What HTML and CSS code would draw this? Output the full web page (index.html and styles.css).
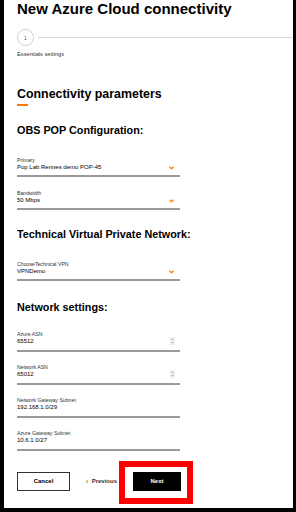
FILE: index.html
```html
<!DOCTYPE html>
<html lang="en">

<head>
    <meta charset="UTF-8" />
    <meta name="viewport" content="width=device-width, initial-scale=1.0" />
    <title>New Azure Cloud connectivity</title>
    <link rel="stylesheet" href="styles.css">
</head>

<body>

    <div class="page">
        <h1 class="title">New Azure Cloud connectivity</h1>

        <div class="stepper">
            <span class="step_num">1</span>
            <span class="step_line"></span>
        </div>
        <div class="step_label">Essentials settings</div>

        <h2 class="section_title">Connectivity parameters</h2>
        <div class="accent"></div>

        <div class="group">
            <h3 class="group_title">OBS POP Configuration:</h3>
            <div class="field select">
                <div class="field_label">Primary</div>
                <div class="field_value">
                    <span>Pop Lab Rennes demo POP-45</span>
                    <svg class="chevron" width="5" height="4" viewBox="0 0 5 4"><polyline points="0.6,0.8 2.5,2.9 4.4,0.8" fill="none" stroke="#ff7900" stroke-width="1.3" /></svg>
                </div>
            </div>
            <div class="field select">
                <div class="field_label">Bandwidth</div>
                <div class="field_value">
                    <span>50 Mbps</span>
                    <svg class="chevron" width="5" height="4" viewBox="0 0 5 4"><polyline points="0.6,0.8 2.5,2.9 4.4,0.8" fill="none" stroke="#ff7900" stroke-width="1.3" /></svg>
                </div>
            </div>
        </div>

        <div class="group">
            <h3 class="group_title">Technical Virtual Private Network:</h3>
            <div class="field select">
                <div class="field_label">ChooseTechnical VPN</div>
                <div class="field_value">
                    <span>VPNDemo</span>
                    <svg class="chevron" width="5" height="4" viewBox="0 0 5 4"><polyline points="0.6,0.8 2.5,2.9 4.4,0.8" fill="none" stroke="#ff7900" stroke-width="1.3" /></svg>
                </div>
            </div>
        </div>

        <div class="group network">
            <h3 class="group_title">Network settings:</h3>
            <div class="field">
                <div class="field_label">Azure ASN</div>
                <div class="field_value">
                    <span>65512</span>
                    <svg class="spinner" width="5" height="8" viewBox="0 0 5 8"><rect width="5" height="8" fill="#efefef" /><polygon points="1,3 2.5,1.5 4,3" fill="#b5b5b5" /><polygon points="1,5 2.5,6.5 4,5" fill="#b5b5b5" /></svg>
                </div>
            </div>
            <div class="field">
                <div class="field_label">Network ASN</div>
                <div class="field_value">
                    <span>65012</span>
                    <svg class="spinner" width="5" height="8" viewBox="0 0 5 8"><rect width="5" height="8" fill="#efefef" /><polygon points="1,3 2.5,1.5 4,3" fill="#b5b5b5" /><polygon points="1,5 2.5,6.5 4,5" fill="#b5b5b5" /></svg>
                </div>
            </div>
            <div class="field">
                <div class="field_label">Network Gateway Subnet</div>
                <div class="field_value"><span>192.168.1.0/29</span></div>
            </div>
            <div class="field">
                <div class="field_label">Azure Gateway Subnet</div>
                <div class="field_value"><span>10.6.1.0/27</span></div>
            </div>
        </div>

        <div class="actions">
            <button class="btn cancel">Cancel</button>
            <button class="btn previous"><span class="prev_arrow">&lsaquo;</span>Previous</button>
            <button class="btn next">Next</button>
        </div>
    </div>

</body>

</html>
```

FILE: styles.css
```css
* {
    box-sizing: border-box;
    font-family: 'Liberation Sans', Arial, sans-serif;
}

body {
    margin: 0;
    padding: 0;
    background-color: #000;
    width: 296px;
    height: 512px;
    overflow: hidden;
}

.page {
    width: 289px;
    height: 508px;
    margin-left: 4px;
    padding-left: 13px;
    background-color: #fff;
    color: #000;
}

.title {
    margin: 0;
    font-size: 15px;
    line-height: 17px;
    font-weight: 700;
}

/* stepper */

.stepper {
    display: flex;
    align-items: center;
    margin-top: 12px;
    height: 17px;
}

.step_num {
    width: 17px;
    height: 17px;
    border: 1px solid #cfcfcf;
    border-radius: 50%;
    display: flex;
    align-items: center;
    justify-content: center;
    font-size: 5px;
    color: #555;
}

.step_line {
    flex-grow: 1;
    height: 1px;
    margin-left: 4px;
    background-color: #d9d9d9;
}

.step_label {
    margin-top: 5px;
    font-size: 5.7px;
    line-height: 7px;
    color: #333;
}

/* sections */

.section_title {
    margin: 29px 0 0;
    font-size: 12.4px;
    line-height: 15px;
    font-weight: 700;
}

.accent {
    width: 11px;
    height: 2px;
    margin-top: 2px;
    background-color: #ff7900;
}

.group {
    width: 163px;
}

.group_title {
    margin: 18px 0 20px;
    font-size: 10.8px;
    line-height: 13px;
    font-weight: 700;
    white-space: nowrap;
}

.group:first-of-type .group_title {
    margin-top: 12px;
    margin-bottom: 20.5px;
}

.network .group_title {
    margin-top: 19.5px;
    margin-bottom: 17.5px;
}

/* fields */

.field {
    padding-bottom: 5px;
    border-bottom: 2px solid #9a9a9a;
}

.field + .field {
    margin-top: 12px;
}

.select {
    padding-bottom: 4px;
}

.select + .select {
    margin-top: 13px;
}

.field_label {
    font-size: 5.2px;
    line-height: 6px;
    color: #333;
}

.field_value {
    display: flex;
    justify-content: space-between;
    align-items: center;
    padding-right: 5px;
    font-size: 6px;
    line-height: 8px;
}

.chevron {
    margin-top: 2px;
    margin-right: 1px;
}

/* buttons */

.actions {
    display: flex;
    align-items: center;
    gap: 16px;
    margin-top: 20.5px;
}

.btn {
    margin: 0;
    padding: 0;
    height: 19px;
    font-size: 6px;
    font-weight: 700;
    border: 0;
    background: none;
    cursor: pointer;
}

.cancel {
    width: 53px;
    border: 1px solid #333;
    color: #000;
}

.previous {
    display: flex;
    align-items: center;
    color: #333;
}

.prev_arrow {
    margin-right: 3px;
    font-size: 8px;
    color: #ff7900;
}

.next {
    width: 48px;
    background-color: #000;
    color: #fff;
    position: relative;
}

/* highlight frame drawn over the screenshot */
.next::after {
    content: "";
    position: absolute;
    top: -11px;
    right: -12px;
    bottom: -13px;
    left: -14px;
    border: 6px solid #f00;
}
```
